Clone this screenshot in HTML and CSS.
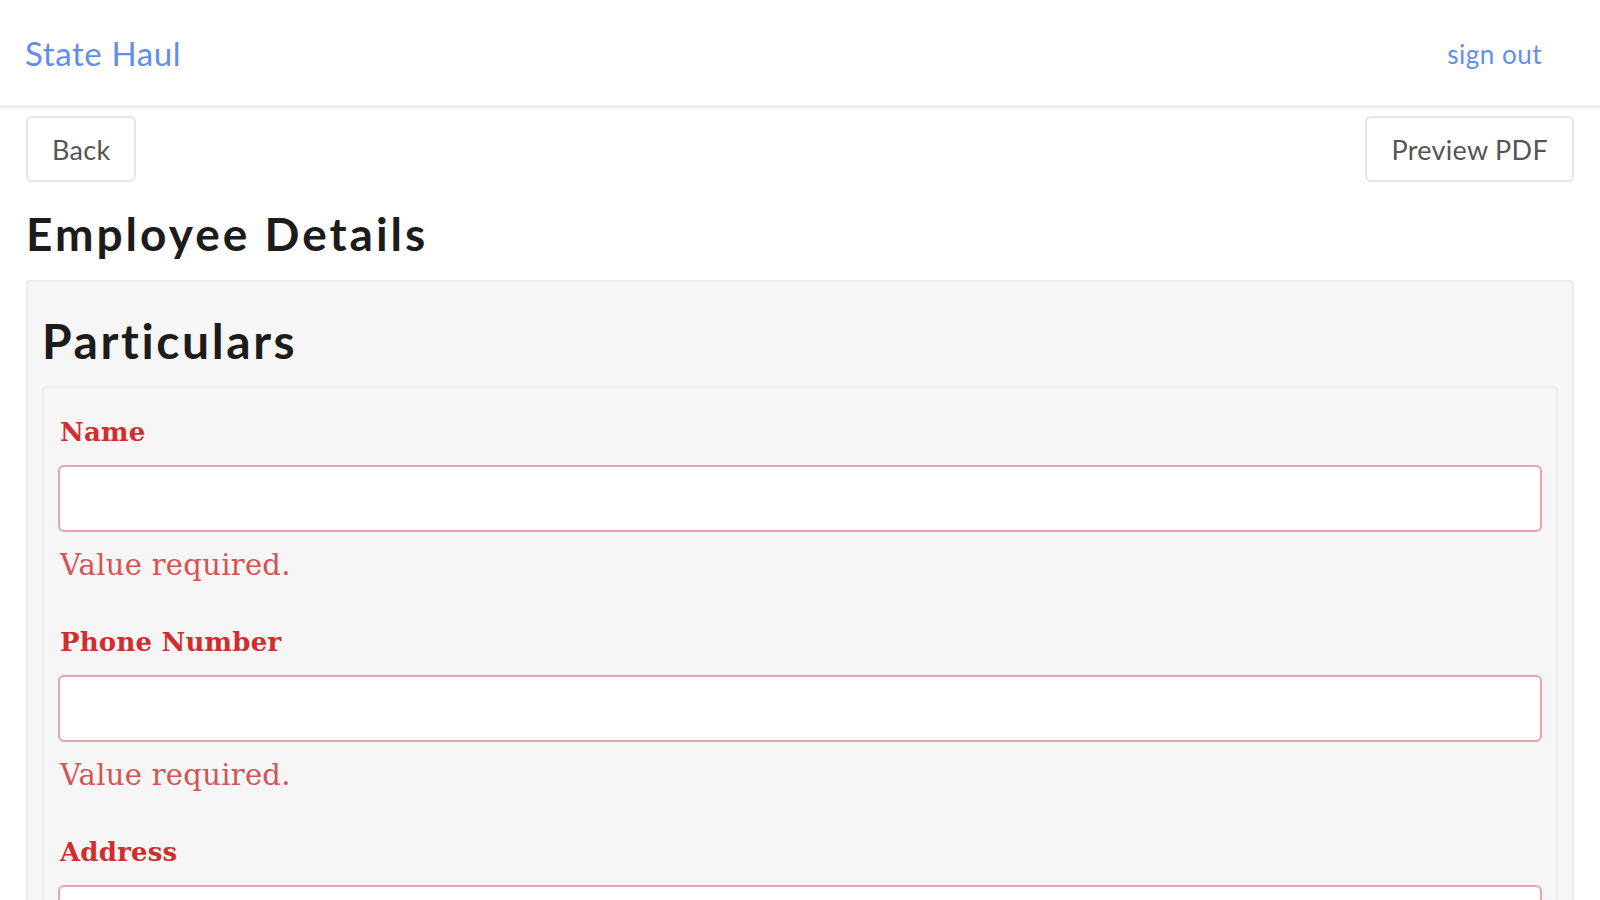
FILE: index.html
```html
<!DOCTYPE html>
<html lang="en">
<head>
<meta charset="utf-8">
<title>State Haul - Employee Details</title>
<link rel="stylesheet" href="styles.css">
</head>
<body>
<header class="topbar">
  <a class="brand" href="#">State Haul</a>
  <a class="signout" href="#">sign out</a>
</header>
<main class="page">
  <div class="toolbar">
    <button class="btn">Back</button>
    <button class="btn">Preview PDF</button>
  </div>
  <h1 class="title">Employee Details</h1>
  <section class="panel">
    <h2 class="panel-title">Particulars</h2>
    <div class="fields">
      <div class="field">
        <label class="label">Name</label>
        <input class="input" type="text">
        <div class="error">Value required.</div>
      </div>
      <div class="field">
        <label class="label">Phone Number</label>
        <input class="input" type="text">
        <div class="error">Value required.</div>
      </div>
      <div class="field">
        <label class="label">Address</label>
        <input class="input" type="text">
        <div class="error">Value required.</div>
      </div>
    </div>
  </section>
</main>
</body>
</html>
```

FILE: styles.css
```css
* { box-sizing: border-box; }
html, body { margin: 0; padding: 0; background: #ffffff; }
body { font-family: Lato, "Open Sans", sans-serif; color: #222; }

.topbar {
  height: 108px;
  display: flex;
  align-items: center;
  justify-content: space-between;
  padding: 0 58px 0 25px;
  border-bottom: 3px solid #eeeeee;
}
.brand {
  font-family: Lato, sans-serif;
  font-size: 33px;
  color: #5f8fea;
  text-decoration: none;
  letter-spacing: 0.6px;
}
.signout {
  font-family: Lato, sans-serif;
  font-size: 26px;
  color: #5f8fea;
  text-decoration: none;
  padding-top: 2px;
  letter-spacing: 0.5px;
}

.page { padding: 0 26px; }

.toolbar {
  display: flex;
  justify-content: space-between;
  padding-top: 8px;
}
.btn {
  height: 66px;
  padding: 0 24px;
  background: #ffffff;
  border: 2px solid #e6e6e6;
  border-radius: 6px;
  font-family: Lato, sans-serif;
  font-size: 27px;
  color: #555555;
  letter-spacing: 0.3px;
}

.title {
  margin: 24px 0 18px;
  font-size: 46px;
  font-weight: 700;
  line-height: 56px;
  color: #1c1c1c;
  letter-spacing: 3px;
}

.panel {
  background: #f6f6f6;
  border: 2px solid #ececec;
  border-radius: 4px;
  padding: 0 14px;
}
.panel-title {
  margin: 31px 0 17px;
  font-size: 48px;
  font-weight: 700;
  line-height: 56px;
  color: #1c1c1c;
  letter-spacing: 2.6px;
}

.fields {
  border: 2px solid #ececec;
  border-radius: 4px;
  padding: 27px 14px 0;
}
.field { margin-bottom: 43px; }
.label {
  display: block;
  font-family: "DejaVu Serif", serif;
  font-weight: 700;
  font-size: 26px;
  line-height: 34px;
  color: #cf2e2e;
  margin-bottom: 16px;
  padding-left: 2px;
  letter-spacing: 0.2px;
}
.input {
  display: block;
  width: 100%;
  height: 67px;
  background: #ffffff;
  border: 2px solid #e7a4aa;
  border-radius: 6px;
  outline: none;
}
.error {
  font-family: "DejaVu Serif", serif;
  font-size: 29px;
  line-height: 34px;
  color: #d45454;
  margin-top: 16px;
  padding-left: 2px;
  letter-spacing: 0.3px;
}
```
